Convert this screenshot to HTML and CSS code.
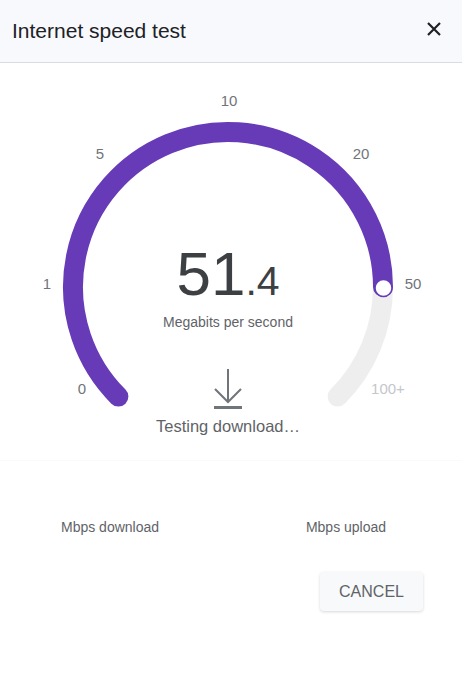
FILE: index.html
```html
<html>

<head>
    <link rel="stylesheet" href="styles.css">
</head>

<body>
    <div class="dialog">
        <div class="header">
            <h1 class="title">Internet speed test</h1>
            <button class="close" aria-label="Close">
                <svg width="16" height="16" viewBox="0 0 16 16">
                    <path d="M2 2 L14 14 M14 2 L2 14" stroke="#202124" stroke-width="2.2" fill="none" />
                </svg>
            </button>
        </div>

        <div class="gauge">
            <svg class="dial" width="462" height="346" viewBox="0 64 462 346">
                <!-- track, then progress up to 50 -->
                <path d="M 383 288 A 155 155 0 0 1 337.6 397.6" stroke="#eeeeee" stroke-width="20" fill="none" stroke-linecap="round" />
                <path d="M 118.4 397.6 A 155 155 0 1 1 383 288" stroke="#673ab7" stroke-width="20" fill="none" stroke-linecap="round" />
                <circle cx="383.5" cy="289" r="8.5" fill="#fff" stroke="#673ab7" stroke-width="1.5" />
                <text class="tick" x="82" y="389">0</text>
                <text class="tick" x="47" y="284">1</text>
                <text class="tick" x="100" y="154">5</text>
                <text class="tick" x="229" y="101">10</text>
                <text class="tick" x="361" y="154">20</text>
                <text class="tick" x="413" y="284">50</text>
                <text class="tick off" x="388" y="389">100+</text>
            </svg>
            <div class="readout">
                <div class="speed">51<span class="decimal">.4</span></div>
                <div class="unit">Megabits per second</div>
                <svg class="arrow" width="30" height="42" viewBox="0 0 30 42">
                    <path d="M15 0 V33 M2 20 L15 33 L28 20" stroke="#70757a" stroke-width="2" fill="none" />
                    <path d="M1 38.5 H29" stroke="#70757a" stroke-width="3" fill="none" />
                </svg>
                <div class="status">Testing download…</div>
            </div>
        </div>

        <div class="results">
            <div class="stat">
                <div class="value"></div>
                <div class="label">Mbps download</div>
            </div>
            <div class="stat">
                <div class="value"></div>
                <div class="label">Mbps upload</div>
            </div>
        </div>

        <div class="actions">
            <button class="cancel">CANCEL</button>
        </div>
    </div>
</body>

</html>
```

FILE: styles.css
```css
body {
    margin: 0;
    background-color: #ffffff;
    font-family: "Liberation Sans", Arial, sans-serif;
    color: #202124;
}

.dialog {
    width: 462px;
}

.header {
    display: flex;
    align-items: center;
    justify-content: space-between;
    height: 63px;
    padding: 0 20px 0 12px;
    box-sizing: border-box;
    background-color: #f8f9fd;
    border-bottom: 1px solid #dadce0;
}

.title {
    margin: 0;
    font-size: 21px;
    font-weight: normal;
    color: #202124;
}

.close {
    border: none;
    background: none;
    padding: 0;
    margin-top: -4px;
    display: flex;
}

.gauge {
    display: grid;
    justify-items: center;
}

.dial,
.readout {
    grid-area: 1 / 1;
}

.dial {
    justify-self: start;
}

.tick {
    font-size: 15px;
    fill: #70757a;
    text-anchor: middle;
    dominant-baseline: central;
}

.tick.off {
    fill: #c4c7cb;
}

.readout {
    display: flex;
    flex-direction: column;
    align-items: center;
    padding-top: 180px;
    margin-right: 6px;
}

.speed {
    font-size: 62px;
    line-height: 62px;
    color: #3c4043;
}

.decimal {
    font-size: 41px;
}

.unit {
    margin-top: 2px;
    font-size: 14px;
    line-height: 16px;
    color: #5f6368;
}

.arrow {
    margin-top: 39px;
}

.status {
    margin-top: 5px;
    font-size: 16.5px;
    line-height: 20px;
    color: #5f6368;
}

.results {
    display: flex;
    gap: 36px;
    padding: 0 0 0 10px;
    margin-top: 24px;
    border-top: 1px solid #fafafa;
}

.stat {
    width: 200px;
    display: flex;
    flex-direction: column;
    align-items: center;
}

.value {
    height: 57px;
}

.label {
    font-size: 14px;
    line-height: 18px;
    color: #5f6368;
}

.actions {
    display: flex;
    justify-content: flex-end;
    padding: 36px 39px 0 0;
}

.cancel {
    width: 103px;
    height: 39px;
    border: none;
    border-radius: 4px;
    background-color: #f8f9fa;
    box-shadow: 0 1px 3px rgba(60, 64, 67, 0.2);
    font-family: "Liberation Sans", Arial, sans-serif;
    font-size: 16px;
    color: #5f6368;
    cursor: pointer;
}
```
